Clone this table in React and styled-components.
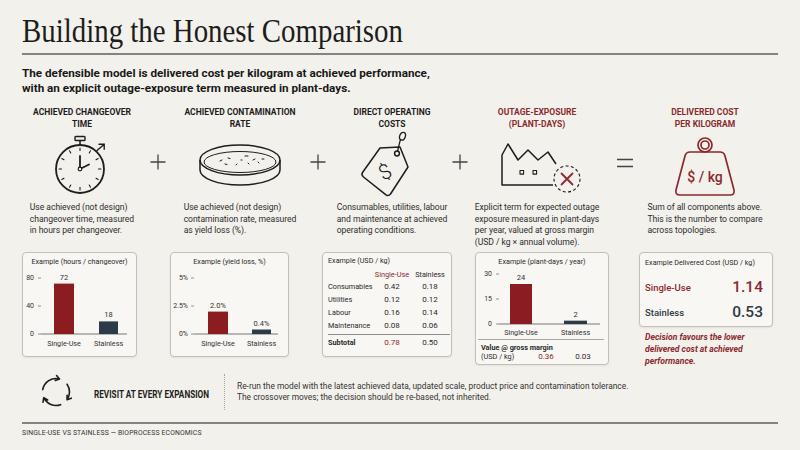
import React from "react";
import styled, { createGlobalStyle } from "styled-components";

const INK = "#1d1d1d";
const RED = "#8b2a2e";
const BAR_RED = "#8a1c22";
const SLATE = "#2d3a47";
const PAPER = "#f3f1ec";

const GlobalStyle = createGlobalStyle`
  html, body { margin: 0; padding: 0; background: ${PAPER}; }
  body {
    font-family: Roboto, "Liberation Sans", sans-serif;
    color: ${INK};
  }
`;

const Page = styled.div`
  display: flow-root;
  width: 800px;
  height: 450px;
  box-sizing: border-box;
  padding: 0 22px;
  overflow: hidden;
`;

const Title = styled.h1`
  margin: 15px 0 0;
  height: 33px;
  font-family: "Liberation Serif", "Times New Roman", serif;
  font-weight: 400;
  font-size: 33px;
  line-height: 33px;
  white-space: nowrap;
  transform: scaleX(0.875);
  transform-origin: left center;
`;

const Rule = styled.div`
  margin-top: ${(p) => p.$top}px;
  height: 1.5px;
  background: #858280;
`;

const Lead = styled.p`
  margin: 11px 0 0;
  font-size: 11.7px;
  font-weight: 700;
  line-height: 15px;
  color: #181818;
`;

/* ---- the five terms of the sum ---- */

const Terms = styled.div`
  display: grid;
  grid-template-columns: 120px 32px 132px 24px 124px 12px 142px 34px 126px;
  height: 146px;
  margin-top: 10.5px;
`;

const Term = styled.div`
  display: flex;
  flex-direction: column;
  align-items: center;
  min-width: 0;
`;

const TermHeading = styled.h3`
  margin: 0;
  height: 24px;
  font-size: 8.5px;
  font-weight: 700;
  line-height: 12px;
  text-align: center;
  white-space: nowrap;
  color: ${(p) => (p.$accent ? RED : INK)};
`;

const IconBox = styled.div`
  height: 70px;
  display: flex;
  align-items: center;
  justify-content: center;
`;

const TermText = styled.p`
  margin: 2px 0 0;
  font-size: 8.6px;
  letter-spacing: -0.05px;
  line-height: 11.7px;
  color: #2e2e2e;
  white-space: nowrap;
`;

const Operator = styled.div`
  justify-self: center;
  margin-top: ${(p) => p.$top}px;
  display: flex;
`;

/* ---- example cards ---- */

const Examples = styled.div`
  display: grid;
  grid-template-columns: 115px 33px 119px 33px 130px 23px 134px 30px 134px;
  align-items: start;
  height: 113px;
`;

const Card = styled.div`
  height: ${(p) => p.$h}px;
  box-sizing: border-box;
  background: #f8f7f4;
  border: 1px solid #c3c0b9;
  border-radius: 4px;
  box-shadow: 0 1px 2px rgba(60, 50, 40, 0.08);
  overflow: hidden;
`;

const Slot = styled.div`
  grid-column: ${(p) => p.$col};
`;

const CardTitle = styled.div`
  height: 10px;
  padding-top: ${(p) => p.$pad}px;
  padding-left: ${(p) => (p.$left ? 5 : 0)}px;
  font-size: 7.2px;
  line-height: 10px;
  text-align: ${(p) => (p.$left ? "left" : "center")};
  white-space: nowrap;
  color: #2a2a2a;
`;

const Chart = styled.svg`
  display: block;
  font-family: Roboto, "Liberation Sans", sans-serif;
`;

const Ledger = styled.div`
  display: grid;
  grid-template-columns: 46px 36px 40px;
  padding: 2px 2px 0 5px;
  font-size: 7.3px;
  color: #2a2a2a;
`;

const Cell = styled.div`
  height: ${(p) => p.$h || 13}px;
  display: flex;
  align-items: center;
  justify-content: ${(p) => (p.$num ? "center" : "flex-start")};
  color: ${(p) => (p.$red ? RED : "inherit")};
  font-weight: ${(p) => (p.$bold ? 700 : 400)};
  font-size: ${(p) => (p.$big ? 8 : 7.3)}px;
  white-space: nowrap;
`;

const LedgerRule = styled.div`
  grid-column: 1 / -1;
  height: 1px;
  margin-top: 2px;
  background: #8e8b86;
`;

const MarginRule = styled.div`
  height: 1px;
  margin: 0 4px 0 2px;
  background: #aaa7a1;
`;

const MarginGrid = styled.div`
  display: grid;
  grid-template-columns: 48px 34px 40px;
  padding: 3px 0 0 5px;
  font-size: 7.3px;
  line-height: 9px;
  color: #2a2a2a;
`;

const MarginLabel = styled.div`
  grid-column: 1 / -1;
  font-weight: 700;
`;

const MarginValue = styled.div`
  text-align: center;
  color: ${(p) => (p.$red ? RED : "inherit")};
  font-size: 8px;
`;

const CostRow = styled.div`
  display: flex;
  justify-content: space-between;
  align-items: center;
  height: 25px;
  padding: 0 9px 0 5px;
  margin-top: ${(p) => p.$top || 0}px;
`;

const CostLabel = styled.span`
  font-size: 9.5px;
  font-weight: 500;
  color: ${(p) => (p.$red ? RED : "#2f3a44")};
`;

const CostValue = styled.span`
  font-size: 15.5px;
  font-weight: 500;
  color: ${(p) => (p.$red ? RED : "#2f3a44")};
`;

const Verdict = styled.p`
  margin: 4px 0 0;
  padding-left: 6px;
  font-size: 8.6px;
  line-height: 12px;
  font-weight: 700;
  font-style: italic;
  color: ${RED};
  white-space: nowrap;
`;

/* ---- revisit band + footer ---- */

const Revisit = styled.div`
  display: flex;
  align-items: center;
  height: 36px;
  margin-top: 9px;
  padding-left: 16px;
`;

const RevisitLabel = styled.div`
  width: 118px;
  margin-left: 20px;
  white-space: nowrap;
  span {
    display: inline-block;
    font-size: 10.5px;
    font-weight: 700;
    transform: scaleX(0.78);
    transform-origin: left center;
  }
`;

const DotRule = styled.div`
  width: 0;
  height: 36px;
  margin: 0 12px;
  border-left: 1px dotted #a8a5a0;
`;

const RevisitText = styled.p`
  margin: 0;
  font-size: 8.4px;
  line-height: 11px;
  color: #333;
  white-space: nowrap;
`;

const Footer = styled.div`
  margin-top: 4px;
  font-size: 6.8px;
  line-height: 10px;
  letter-spacing: 0.15px;
  color: #333;
`;

/* ---- drawings ---- */

const Plus = () => (
  <svg width="16" height="16" viewBox="0 0 16 16" stroke="#444" strokeWidth="1.3">
    <path d="M8 0.5V15.5M0.5 8H15.5" />
  </svg>
);

const Equals = () => (
  <svg width="16" height="10" viewBox="0 0 16 10" stroke="#444" strokeWidth="1.3">
    <path d="M0 1.5H16M0 8.5H16" />
  </svg>
);

const Stopwatch = () => {
  const ticks = Array.from({ length: 12 }, (_, i) => {
    const a = (i * 30 * Math.PI) / 180;
    return (
      <line
        key={i}
        x1={26 + Math.sin(a) * 18.5}
        y1={35 - Math.cos(a) * 18.5}
        x2={26 + Math.sin(a) * 21}
        y2={35 - Math.cos(a) * 21}
      />
    );
  });
  return (
    <svg width="56" height="62" viewBox="0 0 56 62" fill="none" stroke={INK} strokeLinecap="round">
      <rect x="21" y="2.5" width="10" height="4" rx="0.8" strokeWidth="1.4" />
      <line x1="26" y1="6.5" x2="26" y2="11" strokeWidth="1.6" />
      <circle cx="26" cy="35" r="24" strokeWidth="1.8" />
      <g strokeWidth="1.1">{ticks}</g>
      <path d="M26 35V22M26 35L35 30.5" strokeWidth="1.8" />
      <circle cx="26" cy="35" r="1.8" fill={PAPER} strokeWidth="1.2" />
      <path d="M43 16.5L50 10.5M45 10.2H50.2V15.2" strokeWidth="1.4" />
    </svg>
  );
};

const PetriDish = () => (
  <svg width="84" height="48" viewBox="0 0 84 48" fill="none" stroke={INK} strokeWidth="1.5">
    <ellipse cx="42" cy="19" rx="40" ry="15" />
    <ellipse cx="42" cy="21" rx="36" ry="10.5" strokeWidth="1" />
    <path d="M2 19V29A40 15 0 0 0 82 29V19" />
    <path
      d="M22 20l2-1M30 17l2 0.5M47 15h3M55 19l2-1M60 21l1 1M38 24l1-1M27 23l2 0.5M50 22l1 1M64 18h2M43 19h1"
      strokeWidth="1"
      strokeLinecap="round"
    />
  </svg>
);

const PriceTag = () => (
  <svg width="64" height="68" viewBox="0 0 64 68" fill="none" stroke={INK} strokeWidth="1.5" strokeLinejoin="round">
    <path d="M20 17L40 16L48 36L30.5 63Q28.5 65.5 26 63.8L3.5 46Q1 44 2.5 41.5Z" />
    <circle cx="37" cy="22.5" r="2.4" />
    <path d="M37.5 20.3C39 15 39.5 11 40.5 8.5" strokeWidth="1.3" />
    <ellipse cx="42.5" cy="5.2" rx="2.8" ry="4" transform="rotate(20 42.5 5.2)" strokeWidth="1.3" />
    <text
      x="25"
      y="41"
      textAnchor="middle"
      dominantBaseline="central"
      fontSize="21"
      fontFamily="Roboto, sans-serif"
      fontWeight="300"
      fill={INK}
      stroke="none"
      transform="rotate(-28 25 41)"
    >
      $
    </text>
  </svg>
);

const Factory = () => (
  <svg width="90" height="56" viewBox="-8 0 90 56" fill="none" stroke={INK} strokeWidth="1.5" strokeLinejoin="round">
    <path d="M53 48H2V18L8 7L18 23L28 13L38 23L48 15L56 27" />
    <rect x="20" y="33.5" width="3.6" height="3.6" strokeWidth="1.1" />
    <rect x="33" y="33.5" width="3.6" height="3.6" strokeWidth="1.1" />
    <circle cx="67" cy="42" r="13" strokeDasharray="3 2.4" strokeWidth="1.1" />
    <path d="M61.5 36.5L72.5 47.5M72.5 36.5L61.5 47.5" stroke={RED} strokeWidth="1.8" strokeLinecap="round" />
  </svg>
);

const Weight = () => (
  <svg width="64" height="64" viewBox="0 0 64 64" fill="none" stroke={RED} strokeWidth="1.7" strokeLinejoin="round">
    <circle cx="32" cy="12" r="7" />
    <circle cx="32" cy="12" r="4" />
    <path d="M17 19H47Q51 19 52 23L61 57Q62 62 57 62H7Q2 62 3 57L12 23Q13 19 17 19Z" />
    <text
      x="32"
      y="44"
      textAnchor="middle"
      dominantBaseline="central"
      fill={RED}
      stroke="none"
      fontSize="14"
      fontFamily="Roboto, sans-serif"
      fontWeight="500"
    >
      $ / kg
    </text>
  </svg>
);

const Cycle = () => {
  const c = 18;
  const r = 13.5;
  const pt = (deg) => [c + r * Math.cos((deg * Math.PI) / 180), c + r * Math.sin((deg * Math.PI) / 180)];
  const arcs = [
    [190, 285],
    [325, 395],
    [70, 155],
  ];
  return (
    <svg width="36" height="36" viewBox="0 0 36 36" fill="none" stroke={INK} strokeWidth="1.6" strokeLinecap="round" strokeLinejoin="round">
      {arcs.map(([a0, a1]) => {
        const [x0, y0] = pt(a0);
        const [x1, y1] = pt(a1);
        const t = (a1 * Math.PI) / 180;
        const back = Math.atan2(Math.cos(t), -Math.sin(t)) + Math.PI;
        const h1 = [x1 + 4.5 * Math.cos(back + 0.6), y1 + 4.5 * Math.sin(back + 0.6)];
        const h2 = [x1 + 4.5 * Math.cos(back - 0.6), y1 + 4.5 * Math.sin(back - 0.6)];
        return (
          <path
            key={a0}
            d={`M${x0} ${y0}A${r} ${r} 0 0 1 ${x1} ${y1}M${h1[0]} ${h1[1]}L${x1} ${y1}L${h2[0]} ${h2[1]}`}
          />
        );
      })}
    </svg>
  );
};

const BarChart = ({ width, height, labelX, tickX, axisEnd, baseY, scale, max, ticks, bars, xLabelY }) => (
  <Chart width={width} height={height} viewBox={`0 0 ${width} ${height}`}>
    {ticks.map((t) => {
      const y = baseY - (t.v / max) * scale;
      return (
        <g key={t.label}>
          <text x={labelX} y={y} textAnchor="end" dominantBaseline="central" fontSize="7" fill="#333">
            {t.label}
          </text>
          <line x1={tickX} x2={tickX + 3} y1={y} y2={y} stroke="#777" strokeWidth="0.8" />
        </g>
      );
    })}
    <line x1={tickX + 3} x2={axisEnd} y1={baseY} y2={baseY} stroke="#666" strokeWidth="0.9" />
    {bars.map((b) => {
      const h = (b.value / max) * scale;
      const cx = b.x + b.w / 2;
      return (
        <g key={b.label}>
          <rect x={b.x} y={baseY - h} width={b.w} height={h} fill={b.color} />
          <text x={cx} y={baseY - h - 6.5} textAnchor="middle" dominantBaseline="central" fontSize="7.5" fill="#333">
            {b.display}
          </text>
          <text x={cx} y={xLabelY} textAnchor="middle" dominantBaseline="central" fontSize="7.2" fill="#333">
            {b.label}
          </text>
        </g>
      );
    })}
  </Chart>
);

const costs = [
  ["Consumables", "0.42", "0.18"],
  ["Utilities", "0.12", "0.12"],
  ["Labour", "0.16", "0.14"],
  ["Maintenance", "0.08", "0.06"],
];

export default function App() {
  return (
    <Page>
      <GlobalStyle />
      <Title>Building the Honest Comparison</Title>
      <Rule $top={5} />
      <Lead>
        The defensible model is delivered cost per kilogram at achieved performance,
        <br />
        with an explicit outage-exposure term measured in plant-days.
      </Lead>

      <Terms>
        <Term>
          <TermHeading>
            ACHIEVED CHANGEOVER
            <br />
            TIME
          </TermHeading>
          <IconBox>
            <Stopwatch />
          </IconBox>
          <TermText>
            Use achieved (not design)
            <br />
            changeover time, measured
            <br />
            in hours per changeover.
          </TermText>
        </Term>
        <Operator $top={48}>
          <Plus />
        </Operator>
        <Term>
          <TermHeading>
            ACHIEVED CONTAMINATION
            <br />
            RATE
          </TermHeading>
          <IconBox>
            <PetriDish />
          </IconBox>
          <TermText>
            Use achieved (not design)
            <br />
            contamination rate, measured
            <br />
            as yield loss (%).
          </TermText>
        </Term>
        <Operator $top={48}>
          <Plus />
        </Operator>
        <Term>
          <TermHeading>
            DIRECT OPERATING
            <br />
            COSTS
          </TermHeading>
          <IconBox>
            <PriceTag />
          </IconBox>
          <TermText>
            Consumables, utilities, labour
            <br />
            and maintenance at achieved
            <br />
            operating conditions.
          </TermText>
        </Term>
        <Operator $top={48}>
          <Plus />
        </Operator>
        <Term>
          <TermHeading $accent>
            OUTAGE-EXPOSURE
            <br />
            (PLANT-DAYS)
          </TermHeading>
          <IconBox>
            <Factory />
          </IconBox>
          <TermText>
            Explicit term for expected outage
            <br />
            exposure measured in plant-days
            <br />
            per year, valued at gross margin
            <br />
            (USD / kg × annual volume).
          </TermText>
        </Term>
        <Operator $top={52}>
          <Equals />
        </Operator>
        <Term>
          <TermHeading $accent>
            DELIVERED COST
            <br />
            PER KILOGRAM
          </TermHeading>
          <IconBox>
            <Weight />
          </IconBox>
          <TermText>
            Sum of all components above.
            <br />
            This is the number to compare
            <br />
            across topologies.
          </TermText>
        </Term>
      </Terms>

      <Examples>
        <Slot $col={1}>
          <Card $h={105}>
            <CardTitle $pad={4}>Example (hours / changeover)</CardTitle>
            <BarChart
              width={113}
              height={88}
              labelX={11}
              tickX={15}
              axisEnd={104}
              baseY={67}
              scale={56}
              max={80}
              xLabelY={76}
              ticks={[
                { v: 80, label: "80" },
                { v: 40, label: "40" },
                { v: 0, label: "0" },
              ]}
              bars={[
                { label: "Single-Use", value: 72, display: "72", x: 31, w: 20, color: BAR_RED },
                { label: "Stainless", value: 18, display: "18", x: 76, w: 19, color: SLATE },
              ]}
            />
          </Card>
        </Slot>

        <Slot $col={3}>
          <Card $h={105}>
            <CardTitle $pad={4}>Example (yield loss, %)</CardTitle>
            <BarChart
              width={117}
              height={88}
              labelX={17}
              tickX={20}
              axisEnd={107}
              baseY={67}
              scale={56}
              max={5}
              xLabelY={76}
              ticks={[
                { v: 5, label: "5%" },
                { v: 2.5, label: "2.5%" },
                { v: 0, label: "0%" },
              ]}
              bars={[
                { label: "Single-Use", value: 2, display: "2.0%", x: 37, w: 20, color: BAR_RED },
                { label: "Stainless", value: 0.4, display: "0.4%", x: 81, w: 19, color: SLATE },
              ]}
            />
          </Card>
        </Slot>

        <Slot $col={5}>
          <Card $h={105}>
            <CardTitle $pad={3} $left>
              Example (USD / kg)
            </CardTitle>
            <Ledger>
              <Cell $h={12} />
              <Cell $h={12} $num $red>
                Single-Use
              </Cell>
              <Cell $h={12} $num>
                Stainless
              </Cell>
              {costs.map(([name, su, ss]) => (
                <React.Fragment key={name}>
                  <Cell>{name}</Cell>
                  <Cell $num $big>
                    {su}
                  </Cell>
                  <Cell $num $big>
                    {ss}
                  </Cell>
                </React.Fragment>
              ))}
              <LedgerRule />
              <Cell $h={14} $bold>
                Subtotal
              </Cell>
              <Cell $h={14} $num $red $big>
                0.78
              </Cell>
              <Cell $h={14} $num $big>
                0.50
              </Cell>
            </Ledger>
          </Card>
        </Slot>

        <Slot $col={7}>
          <Card $h={113}>
            <CardTitle $pad={4}>Example (plant-days / year)</CardTitle>
            <BarChart
              width={132}
              height={72}
              labelX={16}
              tickX={20}
              axisEnd={124}
              baseY={57}
              scale={50}
              max={30}
              xLabelY={65}
              ticks={[
                { v: 30, label: "30" },
                { v: 15, label: "15" },
                { v: 0, label: "0" },
              ]}
              bars={[
                { label: "Single-Use", value: 24, display: "24", x: 34, w: 22, color: BAR_RED },
                { label: "Stainless", value: 2, display: "2", x: 88, w: 23, color: SLATE },
              ]}
            />
            <MarginRule />
            <MarginGrid>
              <MarginLabel>Value @ gross margin</MarginLabel>
              <div>(USD / kg)</div>
              <MarginValue $red>0.36</MarginValue>
              <MarginValue>0.03</MarginValue>
            </MarginGrid>
          </Card>
        </Slot>

        <Slot $col={9}>
          <Card $h={75}>
            <CardTitle $pad={5} $left>
              Example Delivered Cost (USD / kg)
            </CardTitle>
            <CostRow $top={6.5}>
              <CostLabel $red>Single-Use</CostLabel>
              <CostValue $red>1.14</CostValue>
            </CostRow>
            <CostRow>
              <CostLabel>Stainless</CostLabel>
              <CostValue>0.53</CostValue>
            </CostRow>
          </Card>
          <Verdict>
            Decision favours the lower
            <br />
            delivered cost at achieved
            <br />
            performance.
          </Verdict>
        </Slot>
      </Examples>

      <Revisit>
        <Cycle />
        <RevisitLabel>
          <span>REVISIT AT EVERY EXPANSION</span>
        </RevisitLabel>
        <DotRule />
        <RevisitText>
          Re-run the model with the latest achieved data, updated scale, product price and contamination tolerance.
          <br />
          The crossover moves; the decision should be re-based, not inherited.
        </RevisitText>
      </Revisit>

      <Rule $top={12} />
      <Footer>SINGLE-USE VS STAINLESS — BIOPROCESS ECONOMICS</Footer>
    </Page>
  );
}
